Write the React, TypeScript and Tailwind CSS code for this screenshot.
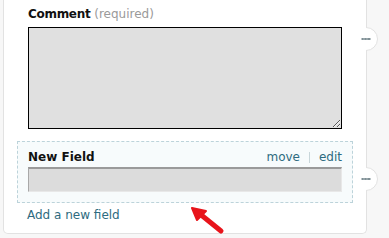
import React from 'react';

const Handle: React.FC<{ top: number }> = ({ top }) => (
    <div className="absolute left-[354px] w-[24px] h-[24px]" style={{ top }}>
        <svg width="24" height="24" viewBox="0 0 24 24">
            <circle cx="12" cy="12" r="11.5" fill="#ffffff" />
            <path d="M12 0.5 A11.5 11.5 0 0 1 12 23.5" fill="none" stroke="#e2e2e2" strokeWidth="1" />
            <rect x="7.5" y="11" width="9" height="2" fill="#7f8f95" />
            <rect x="9.5" y="11" width="1" height="2" fill="#b0bcc0" />
            <rect x="12.5" y="11" width="1" height="2" fill="#b0bcc0" />
        </svg>
    </div>
);

const Arrow: React.FC = () => (
    <svg className="absolute left-[186px] top-[202px]" width="42" height="36" viewBox="0 0 42 36">
        <path d="M35 29 L14 12" stroke="#e8141b" strokeWidth="5" strokeLinecap="round" />
        <path d="M6 6 L20 9 L11 18 Z" fill="#e8141b" stroke="#e8141b" strokeWidth="2" strokeLinejoin="round" />
    </svg>
);

export default function App() {
    return (
        <div className="relative w-[389px] h-[238px] overflow-hidden bg-[#f7f7f7]" style={{ fontFamily: '"DejaVu Sans", Verdana, sans-serif' }}>
            <div className="ml-[3px] w-[364px] h-[234px] bg-white border-l border-r border-b border-[#e2e2e2] rounded-b-[5px] px-[13px] pt-[6px]">
                <div className="px-[11px]">
                    <div className="text-[12px] leading-[16px] h-[21px]">
                        <span className="font-bold text-[#111] tracking-[-0.3px]">Comment</span>{' '}
                        <span className="text-[#9a9a9a]">(required)</span>
                    </div>
                    <textarea className="block w-[314px] h-[102px] bg-[#e0e0e0] border border-black outline-none" />
                </div>
                <div className="mt-[12px] border border-dashed border-[#bcd3da] bg-[#f7fbfc] px-[10px] pt-[5px] pb-[10px]">
                    <div className="flex items-center justify-between text-[12px] leading-[16px] h-[20px]">
                        <span className="font-bold text-[#111]">New Field</span>
                        <span className="flex items-center text-[#2e6b80]">
                            <span>move</span>
                            <span className="mx-[9px] w-px h-[11px] bg-[#c8d6da]" />
                            <span>edit</span>
                        </span>
                    </div>
                    <div className="w-[314px] h-[25px] bg-[#dcdcdc] border-t-2 border-l border-r border-b border-t-[#9a9a9a] border-l-[#a8a8a8] border-r-[#e8e8e8] border-b-[#e8e8e8]" />
                </div>
                <div className="mt-[4px] ml-[10px] text-[12px] leading-[16px] text-[#2e6b80]">Add a new field</div>
            </div>
            <Handle top={27} />
            <Handle top={167} />
            <Arrow />
        </div>
    );
}
